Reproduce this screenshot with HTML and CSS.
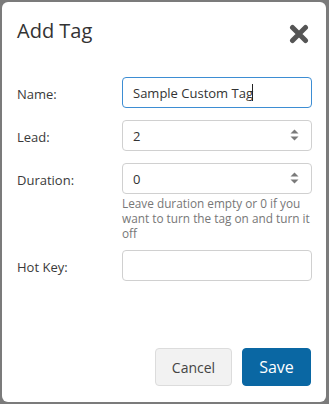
FILE: index.html
```html
<!DOCTYPE html>
<html>
<head>
<meta charset="utf-8">
<link rel="stylesheet" href="styles.css">
</head>
<body>
<div class="dialog">
  <div class="header">
    <h1 class="title">Add Tag</h1>
    <span class="close" aria-label="Close">
      <svg width="20" height="20" viewBox="0 0 20 20"><path d="M3.5 3.5 L16.5 16.5 M16.5 3.5 L3.5 16.5" stroke="#555" stroke-width="5" stroke-linecap="round" fill="none"/></svg>
    </span>
  </div>
  <div class="form">
    <div class="row">
      <label class="label">Name:</label>
      <div class="field">
        <div class="control-wrap">
          <input class="control focus" type="text" value="Sample Custom Tag">
          <span class="caret"></span>
        </div>
      </div>
    </div>
    <div class="row">
      <label class="label">Lead:</label>
      <div class="field">
        <div class="control-wrap">
          <input class="control" type="text" value="2">
          <span class="spin"><svg width="9" height="14" viewBox="0 0 9 14"><path d="M4.5 1.5 L8.5 5.5 L0.5 5.5 Z M0.5 8.5 L8.5 8.5 L4.5 12.5 Z" fill="#7a7a7a"/></svg></span>
        </div>
      </div>
    </div>
    <div class="row row-help">
      <label class="label">Duration:</label>
      <div class="field">
        <div class="control-wrap">
          <input class="control" type="text" value="0">
          <span class="spin"><svg width="9" height="14" viewBox="0 0 9 14"><path d="M4.5 1.5 L8.5 5.5 L0.5 5.5 Z M0.5 8.5 L8.5 8.5 L4.5 12.5 Z" fill="#7a7a7a"/></svg></span>
        </div>
        <p class="help">Leave duration empty or 0 if you want to turn the tag on and turn it off</p>
      </div>
    </div>
    <div class="row">
      <label class="label">Hot Key:</label>
      <div class="field">
        <div class="control-wrap">
          <input class="control" type="text" value="">
        </div>
      </div>
    </div>
  </div>
  <div class="footer">
    <button class="btn btn-cancel">Cancel</button>
    <button class="btn btn-save">Save</button>
  </div>
</div>
</body>
</html>
```

FILE: styles.css
```css
html, body {
  margin: 0;
  padding: 0;
}
body {
  background: #7b7b7b;
  padding: 2px 3px 2px 2px;
  font-family: "Open Sans", "Liberation Sans", sans-serif;
  color: #333;
}
.dialog {
  background: #fff;
  border-radius: 6px;
  height: 400px;
  display: flex;
  flex-direction: column;
  box-sizing: border-box;
}
.header {
  display: flex;
  justify-content: space-between;
  align-items: flex-start;
  padding: 15px 17px 0 15px;
  height: 60px;
  box-sizing: border-box;
}
.title {
  margin: 0;
  font-size: 20px;
  font-weight: 400;
  line-height: 28px;
  color: #333;
}
.close {
  display: block;
  width: 20px;
  height: 20px;
  margin-top: 7px;
}
.close svg { display: block; }
.form {
  padding: 15px 14px 0 15px;
}
.row {
  display: grid;
  grid-template-columns: 105px 1fr;
  margin-bottom: 12px;
}
.row-help { margin-bottom: 9px; }
.label {
  font-size: 13px;
  line-height: 20px;
  padding-top: 7px;
  color: #3a3a3a;
}
.control-wrap {
  position: relative;
}
.control {
  display: block;
  box-sizing: border-box;
  width: 100%;
  height: 31px;
  border: 1px solid #d0d0d0;
  border-radius: 4px;
  padding: 0 10px;
  font-family: "Open Sans", "Liberation Sans", sans-serif;
  font-size: 13px;
  color: #333;
  background: #fff;
  outline: none;
}
.control.focus {
  border-color: #3d8dd3;
}
.caret {
  position: absolute;
  left: 130px;
  top: 7px;
  width: 1px;
  height: 17px;
  background: #222;
}
.spin {
  position: absolute;
  right: 13px;
  top: 8px;
  width: 9px;
  height: 14px;
}
.spin svg { display: block; }
.help {
  margin: 2px 0 0 0;
  font-size: 11.8px;
  line-height: 15px;
  color: #777;
}
.footer {
  margin-top: auto;
  display: flex;
  justify-content: flex-end;
  gap: 10px;
  padding: 0 15px 16px 0;
}
.btn {
  height: 38px;
  border-radius: 4px;
  font-family: "Open Sans", "Liberation Sans", sans-serif;
  cursor: pointer;
}
.btn-cancel {
  width: 77px;
  background: #f2f2f2;
  border: 1px solid #dcdcdc;
  color: #444;
  font-size: 14px;
}
.btn-save {
  width: 69px;
  background: #0a67a3;
  border: 1px solid #0a67a3;
  color: #fff;
  font-size: 16px;
}
```
